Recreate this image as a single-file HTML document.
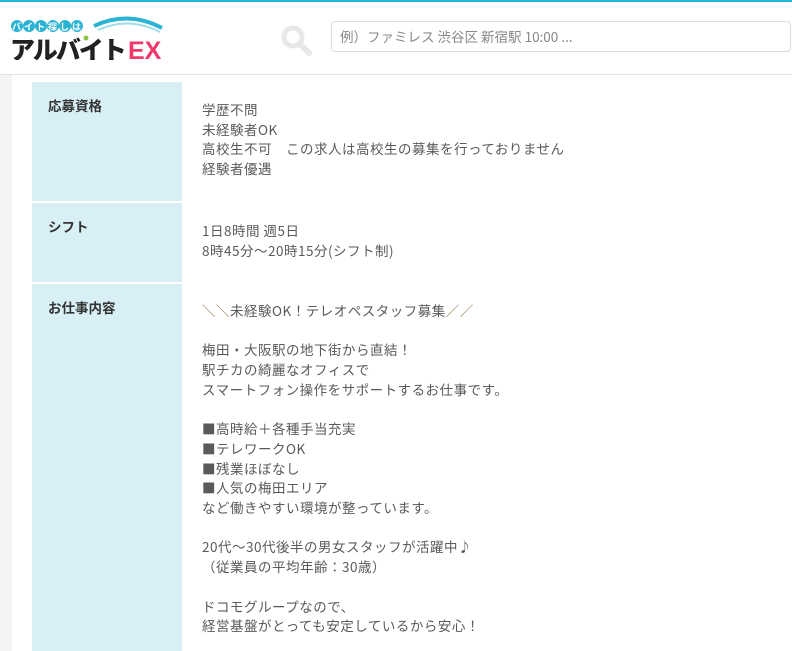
<!DOCTYPE html>
<html style="height:651px;overflow:hidden"><head><meta charset="utf-8"><style>
html,body{margin:0;padding:0}
body{width:792px;height:651px;overflow:hidden;background:#fff;font-family:"Liberation Sans","Noto Sans CJK JP",sans-serif;position:relative}
.top{position:absolute;top:0;left:0;right:0;height:2px;background:#1fb8d8}
.hdr{position:absolute;top:2px;left:0;right:0;height:72px;border-bottom:1px solid #e2e2e2;background:#fff}
.strip{position:absolute;left:0;top:75px;width:12px;height:576px;background:#f4f4f4}
.row{position:absolute;left:32px;width:760px;overflow:hidden}
.lab{position:absolute;left:0;top:0;bottom:0;width:150px;background:#d8eff6;font-size:13.5px;font-weight:bold;color:#333;font-family:"Noto Sans CJK JP",sans-serif}
.lab span{position:absolute;left:16px;top:13px}
.val{position:absolute;left:170px;top:18px;font-size:13.5px;line-height:19.7px;color:#5a5a5a;white-space:pre;letter-spacing:0.5px;font-family:"Noto Sans CJK JP",sans-serif}
.input{position:absolute;left:331px;top:19px;height:31px;border:1px solid #ddd;border-radius:4px;font-size:13.5px;color:#888;line-height:29px;padding-left:8px;box-sizing:border-box;width:460px;font-family:"Noto Sans CJK JP",sans-serif}
</style></head><body>
<div class="top"></div>
<div class="hdr">
<svg style="position:absolute;left:8px;top:12px" width="160" height="46" viewBox="0 0 160 46">
<path d="M86 12 Q120 -4 154 14" stroke="#2ab3d3" stroke-width="4" fill="none"/>
<path d="M90 16 Q120 2 152 18" stroke="#9fdcea" stroke-width="2" fill="none"/>
<g fill="#2ab3d3"><circle cx="9" cy="12" r="6"/><circle cx="21" cy="12" r="6"/><circle cx="33" cy="12" r="6"/><circle cx="45" cy="12" r="6"/><circle cx="57" cy="12" r="6"/><circle cx="69" cy="12" r="6"/></g>
<text x="4" y="16" font-size="9" font-weight="bold" fill="#fff" font-family="Noto Sans CJK JP" letter-spacing="3">バイト探しは</text>
<circle cx="78" cy="24" r="2.5" fill="#8cc63f"/>
<text x="2" y="45" font-size="25" font-weight="900" fill="#222" font-family="Noto Sans CJK JP" letter-spacing="-2">アルバイト</text>
<text x="120" y="45" font-size="25" font-weight="900" fill="#f0386b" font-family="Liberation Sans">EX</text>
</svg>
<svg style="position:absolute;left:280px;top:22px" width="32" height="32" viewBox="0 0 32 32"><circle cx="13" cy="13" r="9" stroke="#e8e8e8" stroke-width="5" fill="none"/><path d="M20 20 L29 29" stroke="#e8e8e8" stroke-width="6" stroke-linecap="round"/></svg>
<div class="input">例）ファミレス 渋谷区 新宿駅 10:00 ...</div>
</div>
<div class="strip"></div>
<div class="row" style="top:82px;height:119px"><div class="lab"><span>応募資格</span></div><div class="val">学歴不問
未経験者OK
高校生不可　この求人は高校生の募集を行っておりません
経験者優遇</div></div>
<div class="row" style="top:203px;height:79px"><div class="lab"><span>シフト</span></div><div class="val">1日8時間 週5日
8時45分～20時15分(シフト制)</div></div>
<div class="row" style="top:284px;height:367px"><div class="lab"><span>お仕事内容</span></div><div class="val" style="top:17px"><span style="color:#a0805a">＼＼</span>未経験OK！テレオペスタッフ募集<span style="color:#a0805a">／／</span>

梅田・大阪駅の地下街から直結！
駅チカの綺麗なオフィスで
スマートフォン操作をサポートするお仕事です。

■高時給＋各種手当充実
■テレワークOK
■残業ほぼなし
■人気の梅田エリア
など働きやすい環境が整っています。

20代～30代後半の男女スタッフが活躍中♪
（従業員の平均年齢：30歳）

ドコモグループなので、
経営基盤がとっても安定しているから安心！</div></div>
</body></html>
